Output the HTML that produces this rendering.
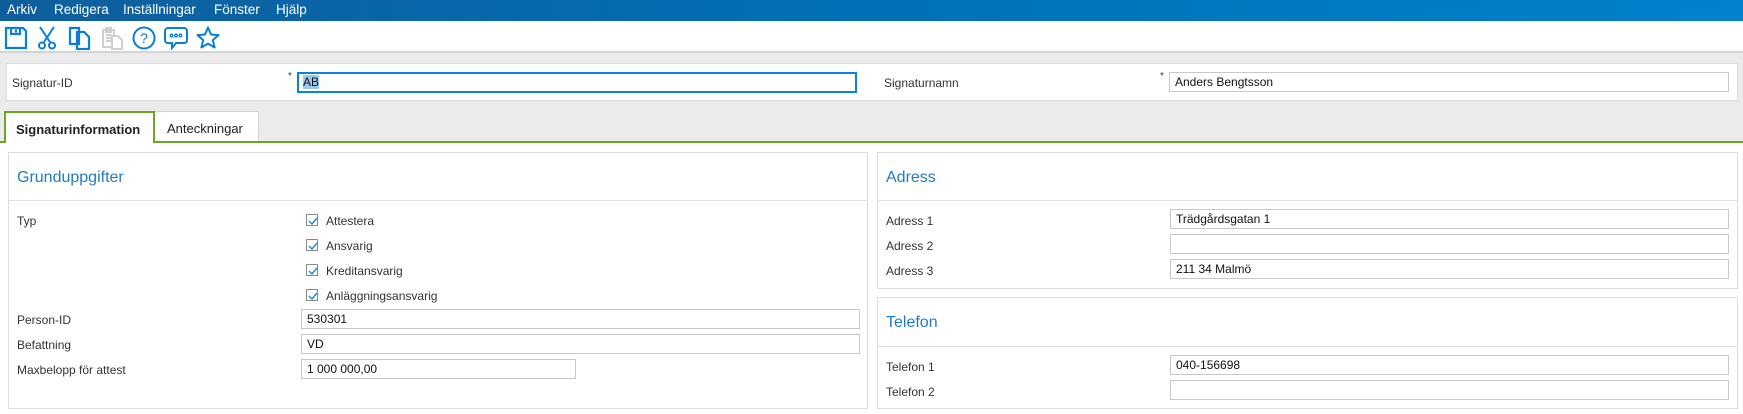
<!DOCTYPE html>
<html><head><meta charset="utf-8"><style>
*{box-sizing:border-box;margin:0;padding:0}
body{width:1743px;height:414px;overflow:hidden;background:#ebebeb;font-family:"Liberation Sans",sans-serif;font-size:12px;color:#222;position:relative}
.a{position:absolute}
#menu{left:0;top:0;width:1743px;height:21px;background:linear-gradient(90deg,#0f5e9c,#0070b8 50%,#0082cc)}
#menu span{position:absolute;top:2px;color:#fff;font-size:13.5px}
#tb{left:0;top:21px;width:1743px;height:32px;background:#fff;border-bottom:2px solid #d4d4d4}
.box{background:#fff;border:1px solid #dcdcdc}
.inp{position:absolute;background:#fff;border:1px solid #c8c8c8;height:20px;padding-left:5px;line-height:18px;font-size:12px;color:#111}
.lbl{position:absolute;font-size:12px;color:#333;line-height:14px}
.h{position:absolute;font-size:16px;color:#1f7dc3}
.cb{position:absolute;width:12px;height:12px;border:1px solid #8a8a8a;background:#fff}
.cb svg{position:absolute;left:1px;top:1px}
.hl{position:absolute;height:1px;background:#e2e2e2}
</style></head><body>
<div id="menu" class="a"><span style="left:7px">Arkiv</span><span style="left:54px">Redigera</span><span style="left:123px">Inställningar</span><span style="left:214px">Fönster</span><span style="left:276px">Hjälp</span></div>
<div id="tb" class="a">
<svg class="a" style="left:4px;top:5px" width="24" height="24" viewBox="0 0 24 24" fill="none" stroke="#0a7fd6" stroke-width="2.2"><path d="M2 2h17l3 3v17H2z"/><path d="M7 2v6h9V2M12 3.5v3"/></svg>
<svg class="a" style="left:37px;top:5px" width="20" height="24" viewBox="0 0 20 24" fill="none" stroke="#0a7fd6" stroke-width="2"><path d="M3 1l10 15M17 1L7 16"/><circle cx="5" cy="19.5" r="3"/><circle cx="15" cy="19.5" r="3"/></svg>
<svg class="a" style="left:68px;top:5px" width="24" height="24" viewBox="0 0 24 24" fill="none" stroke="#0a7fd6" stroke-width="2.2"><path d="M2 2h9v16H2z"/><path d="M9 6h7l5 5v12H9z"/></svg>
<svg class="a" style="left:100px;top:5px" width="24" height="24" viewBox="0 0 24 24" fill="none" stroke="#cfcfcf" stroke-width="2"><path d="M3 4h11v17H3zM6 2h5v4H6zM6 9h5M6 12h5M6 15h5"/><path d="M12 10h6l4 4v9H12z" fill="#fff"/></svg>
<svg class="a" style="left:132px;top:5px" width="24" height="24" viewBox="0 0 24 24" fill="none" stroke="#0a7fd6" stroke-width="2"><circle cx="12" cy="12" r="10.5"/><text x="12" y="17" font-size="14" text-anchor="middle" fill="#0a7fd6" stroke="none" font-family="Liberation Sans">?</text></svg>
<svg class="a" style="left:164px;top:5px" width="24" height="24" viewBox="0 0 24 24" fill="none" stroke="#0a7fd6" stroke-width="2"><path d="M4 2h16a3 3 0 0 1 3 3v9a3 3 0 0 1-3 3h-8l-4 5v-5H4a3 3 0 0 1-3-3V5a3 3 0 0 1 3-3z"/><circle cx="7.5" cy="9.5" r="1.3" stroke-width="1.3"/><circle cx="12" cy="9.5" r="1.3" stroke-width="1.3"/><circle cx="16.5" cy="9.5" r="1.3" stroke-width="1.3"/></svg>
<svg class="a" style="left:196px;top:5px" width="24" height="24" viewBox="0 0 24 24" fill="none" stroke="#0a7fd6" stroke-width="2" stroke-linejoin="round"><path d="M12 1.5l3 7 7.5.6-5.7 5 1.8 7.4L12 17.6l-6.6 3.9 1.8-7.4-5.7-5 7.5-.6z"/></svg>
</div>
<div class="a box" style="left:6px;top:63px;width:1732px;height:38px"></div>
<div class="lbl" style="left:12px;top:76px">Signatur-ID</div>
<div class="lbl" style="left:288px;top:70px;font-size:10px">*</div>
<div class="inp" style="left:297px;top:72px;width:560px;height:21px;border:2px solid #0a84d6;padding-left:4px;line-height:17px"><span style="background:#99c9ef">AB</span></div>
<div class="lbl" style="left:884px;top:76px">Signaturnamn</div>
<div class="lbl" style="left:1160px;top:70px;font-size:10px">*</div>
<div class="inp" style="left:1169px;top:72px;width:560px">Anders Bengtsson</div>
<div class="a" style="left:0;top:141px;width:1743px;height:2px;background:#6aa81e"></div>
<div class="a" style="left:0;top:143px;width:1743px;height:271px;background:#fff"></div>
<div class="a" style="left:4px;top:111px;width:151px;height:32px;background:#fff;border:2px solid #6aa81e;border-bottom:none;font-weight:bold;font-size:13px;padding:9px 0 0 10px;color:#222">Signaturinformation</div>
<div class="a" style="left:155px;top:111px;width:104px;height:30px;background:#fff;border:1px solid #d4d4d4;border-bottom:none;border-left:none;font-size:13px;padding:9px 0 0 12px;color:#222">Anteckningar</div>
<div class="a box" style="left:8px;top:152px;width:860px;height:257px"></div>
<div class="hl" style="left:9px;top:200px;width:858px"></div>
<div class="h" style="left:17px;top:169px">Grunduppgifter</div>
<div class="lbl" style="left:17px;top:214px">Typ</div>
<div class="cb" style="left:306px;top:214px"><svg width="10" height="10" viewBox="0 0 10 10"><path d="M1 5l3 3 5-6" stroke="#1a86d8" stroke-width="1.4" fill="none"/></svg></div><div class="lbl" style="left:326px;top:214px">Attestera</div>
<div class="cb" style="left:306px;top:239px"><svg width="10" height="10" viewBox="0 0 10 10"><path d="M1 5l3 3 5-6" stroke="#1a86d8" stroke-width="1.4" fill="none"/></svg></div><div class="lbl" style="left:326px;top:239px">Ansvarig</div>
<div class="cb" style="left:306px;top:264px"><svg width="10" height="10" viewBox="0 0 10 10"><path d="M1 5l3 3 5-6" stroke="#1a86d8" stroke-width="1.4" fill="none"/></svg></div><div class="lbl" style="left:326px;top:264px">Kreditansvarig</div>
<div class="cb" style="left:306px;top:289px"><svg width="10" height="10" viewBox="0 0 10 10"><path d="M1 5l3 3 5-6" stroke="#1a86d8" stroke-width="1.4" fill="none"/></svg></div><div class="lbl" style="left:326px;top:289px">Anläggningsansvarig</div>
<div class="lbl" style="left:17px;top:313px">Person-ID</div><div class="inp" style="left:301px;top:309px;width:559px">530301</div>
<div class="lbl" style="left:17px;top:338px">Befattning</div><div class="inp" style="left:301px;top:334px;width:559px">VD</div>
<div class="lbl" style="left:17px;top:363px">Maxbelopp för attest</div><div class="inp" style="left:301px;top:359px;width:275px">1 000 000,00</div>
<div class="a box" style="left:877px;top:152px;width:861px;height:137px"></div>
<div class="hl" style="left:878px;top:200px;width:859px"></div>
<div class="h" style="left:886px;top:169px">Adress</div>
<div class="lbl" style="left:886px;top:214px">Adress 1</div><div class="inp" style="left:1170px;top:209px;width:559px">Trädgårdsgatan 1</div>
<div class="lbl" style="left:886px;top:239px">Adress 2</div><div class="inp" style="left:1170px;top:234px;width:559px"></div>
<div class="lbl" style="left:886px;top:264px">Adress 3</div><div class="inp" style="left:1170px;top:259px;width:559px">211 34 Malmö</div>
<div class="a box" style="left:877px;top:297px;width:861px;height:112px"></div>
<div class="hl" style="left:878px;top:346px;width:859px"></div>
<div class="h" style="left:886px;top:314px">Telefon</div>
<div class="lbl" style="left:886px;top:360px">Telefon 1</div><div class="inp" style="left:1170px;top:355px;width:559px">040-156698</div>
<div class="lbl" style="left:886px;top:385px">Telefon 2</div><div class="inp" style="left:1170px;top:380px;width:559px"></div>
</body></html>
